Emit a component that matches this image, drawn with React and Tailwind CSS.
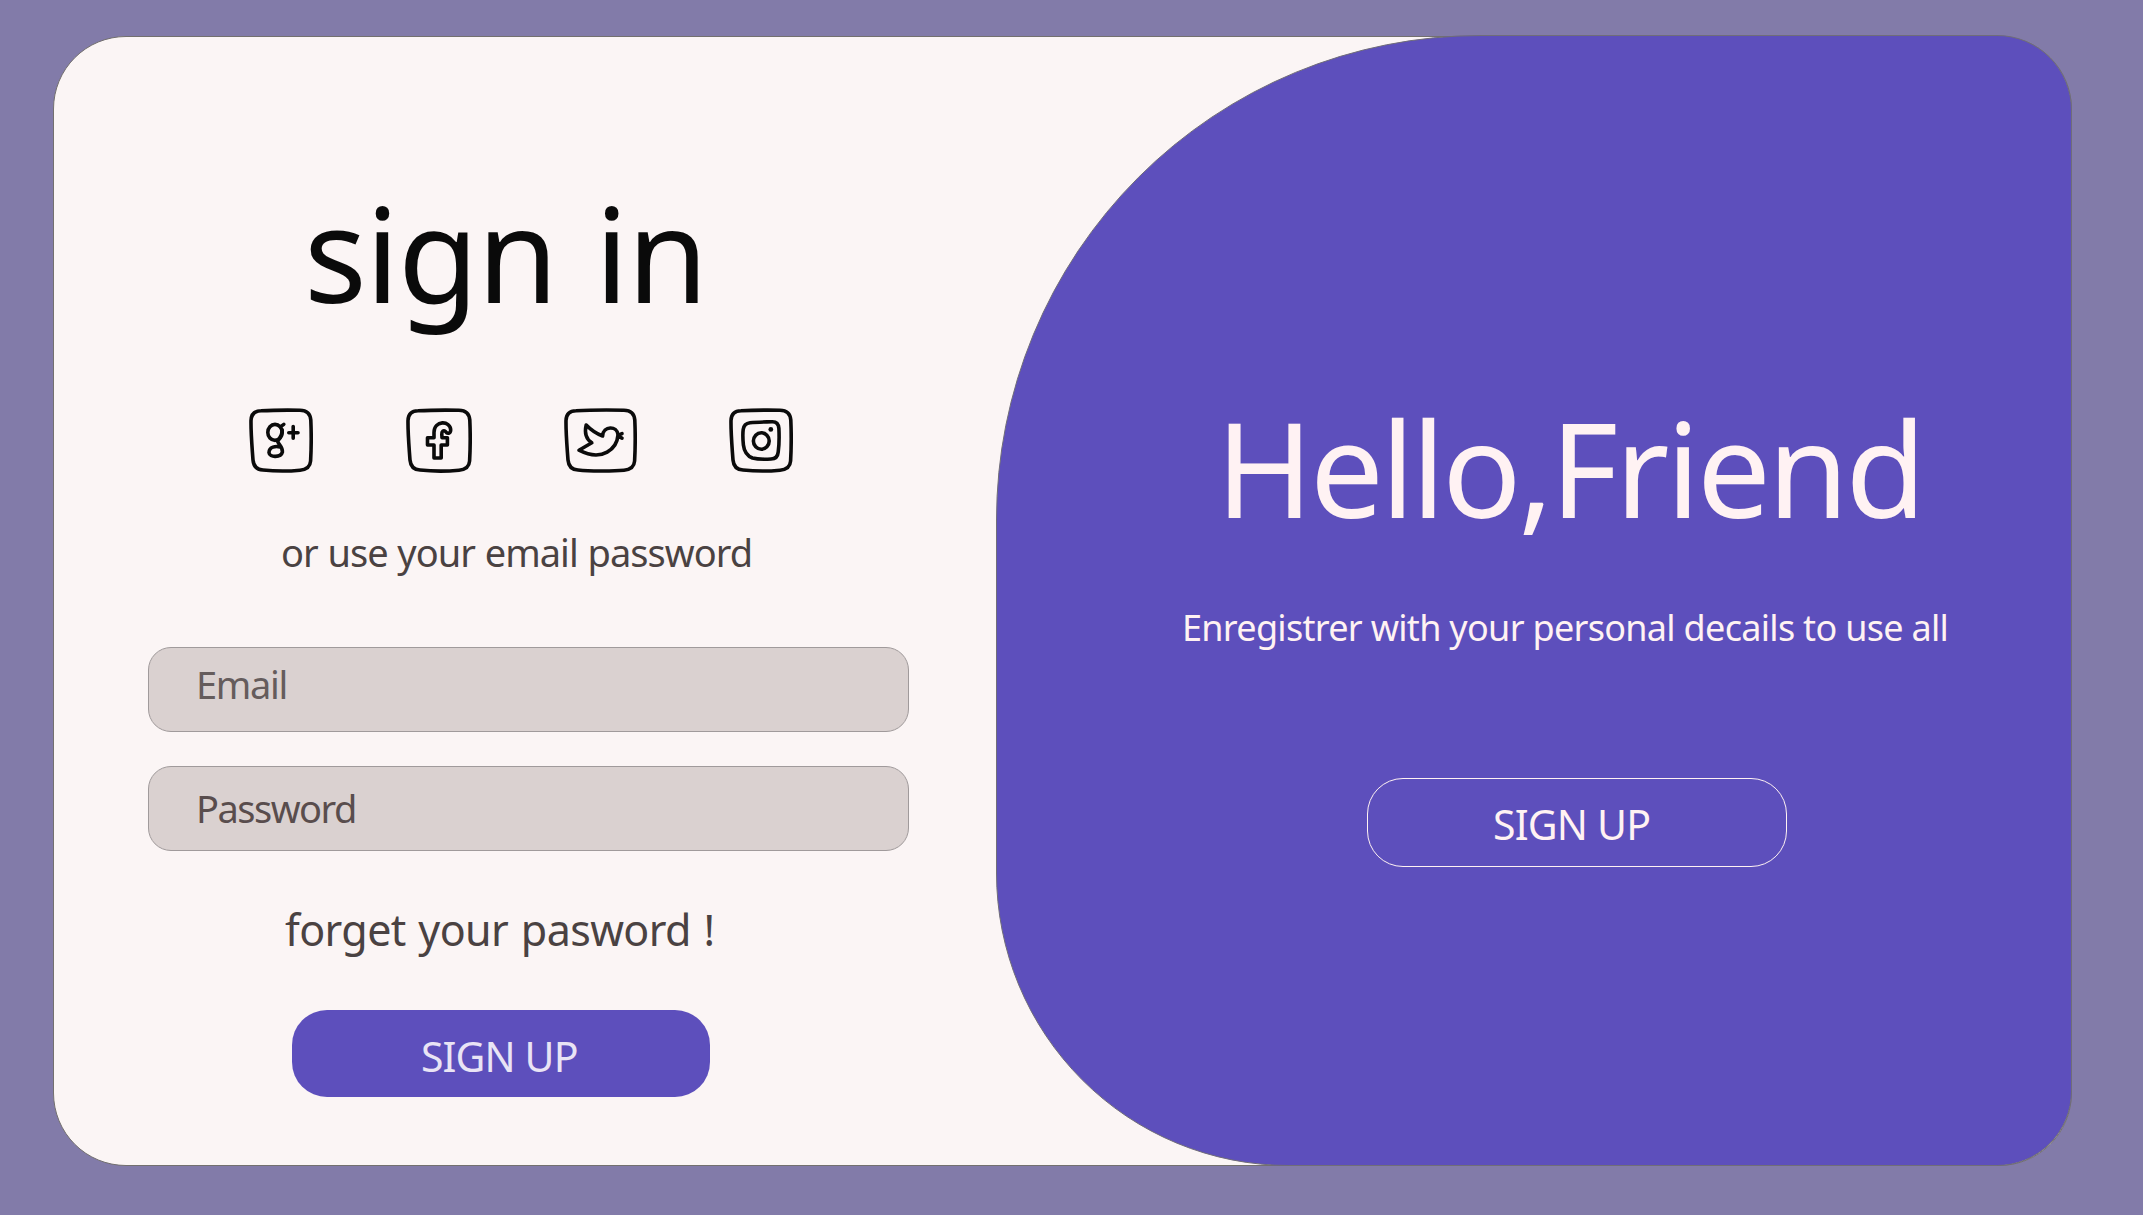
const ink = "#0b0b0b";

function Frame({ w = 64, children }) {
  return (
    <svg width={w} height="66" viewBox={`0 0 ${w} 66`} fill="none" stroke={ink} strokeWidth="3.6" strokeLinecap="round" strokeLinejoin="round">
      <path d={`M12 2.8 C25 2 ${w - 25} 2 ${w - 13} 2.2 Q${w - 3} 2.4 ${w - 2.2} 12 C${w - 1.6} 25 ${w - 1.8} 42 ${w - 2.4} 53 Q${w - 3} 61.4 ${w - 13} 62.2 C${w - 25} 63.4 25 63.2 14 62 Q4.8 61.5 4 52 C3 38 1.8 26 2 12.5 Q2.4 3 12 2.8 Z`} />
      {children}
    </svg>
  );
}

function GooglePlus() {
  return (
    <Frame>
      <ellipse cx="26" cy="24.4" rx="7.2" ry="8" />
      <path d="M32 18.4 L34.8 16.4 M33.2 22 C33.4 28 30 31 28.6 33.4 C30 37 33.8 39 33.4 44 C32 49.6 20.4 49.8 20 44.6 C20 38.4 27 38 31 39 M39.8 24.7 H49 M44.2 18.5 V30.2" />
    </Frame>
  );
}

function Facebook() {
  return (
    <Frame w={66}>
      <path d="M28 50 V37 H21.5 V29.7 H28 V24.5 C28 11.8 44.6 12.4 44.7 22 C44.6 25.8 41.2 26.2 39.6 23.6 C37.4 21.8 35.6 23.4 35.8 26.4 L36 29.7 H41.4 V37 H35.2 V50 Z" />
    </Frame>
  );
}

function Twitter() {
  return (
    <Frame w={73}>
      <path d="M22.2 17 C27.5 22.5 32 25.5 38.6 28 C39 17.5 53.5 17.5 54 27 C53 40 39 54.5 15 42.2 L27.8 34.8 C20.5 30 20.8 23 22.2 17 Z M54 27.4 L58 25.6 M54.5 28.6 L58 30.2" />
    </Frame>
  );
}

function Instagram() {
  return (
    <Frame>
      <path d="M21 14.8 C29 13.8 37 14 43 13.8 Q49.4 13.6 49.9 20.5 C50.4 31 50.2 37 49.2 44 Q48.6 50.8 42 51 C35 51.4 28 51.2 23.5 50 Q15.6 47 14.4 37 C13.8 31 13.6 26 14.2 21.5 Q15 15.6 21 14.8 Z" />
      <ellipse cx="32.3" cy="33" rx="7.9" ry="8.2" />
      <circle cx="41.8" cy="21.4" r="2.4" fill={ink} stroke="none" />
    </Frame>
  );
}

export default function App() {
  return (
    <div className="h-[1215px] w-[2143px] overflow-hidden bg-[#827ba9] pl-[53px] pt-[35px] font-['Noto_Sans','Open_Sans',sans-serif]">
      <main className="flex h-[1131px] w-[2019px]">
        <section className="mr-[-1076px] mt-px flex h-[1130px] w-full flex-col rounded-[73px] border border-[#73706f] bg-[#fbf5f5]">
          <h1 className="ml-[250px] mt-[115px] h-[200px] w-fit whitespace-nowrap text-[131px] leading-[200px] tracking-[-1.3px] text-[#0a0a0a] [word-spacing:5px]">sign in</h1>
          <div className="ml-[195px] mt-[56px] flex h-[66px] items-start">
            <GooglePlus />
            <div className="ml-[93px]"><Facebook /></div>
            <div className="ml-[92px]"><Twitter /></div>
            <div className="ml-[92px]"><Instagram /></div>
          </div>
          <p className="ml-[227px] mt-[48px] h-[60px] w-fit whitespace-nowrap text-[38px] leading-[60px] tracking-[-0.95px] text-[#4a4242] [word-spacing:0.7px]">or use your email password</p>
          <div className="ml-[94px] mt-[65px] h-[85px] w-[761px] rounded-[23px] border border-[#a09a9b] bg-[#dad1d0] pl-[47px]">
            <p className="mt-[5px] w-fit text-[38px] leading-[62px] tracking-[-1.3px] text-[#655c5c]">Email</p>
          </div>
          <div className="ml-[94px] mt-[34px] h-[85px] w-[761px] rounded-[23px] border border-[#a09a9b] bg-[#dad1d0] pl-[47px]">
            <p className="mt-[10px] w-fit text-[38px] leading-[62px] tracking-[-1.5px] text-[#594d4d]">Password</p>
          </div>
          <p className="ml-[231px] mt-[49px] h-[60px] w-fit whitespace-nowrap text-[43px] leading-[60px] tracking-[-0.6px] text-[#4a4242] [word-spacing:2px]">forget your pasword !</p>
          <button className="ml-[238px] mt-[50px] flex h-[87px] w-[418px] items-center whitespace-nowrap rounded-[35px] bg-[#5d4fbc] pl-[129px] pt-[6px] text-[41px] tracking-[-0.9px] text-[#e9e4f5]">SIGN UP</button>
        </section>
        <section className="relative flex h-[1131px] w-[1076px] shrink-0 flex-col rounded-bl-[293px] rounded-br-[75px] rounded-tl-[485px] rounded-tr-[75px] border border-[#706d78] bg-[#5d4fbc] text-[#fff2f3]">
          <h2 className="ml-[219px] mt-[331px] h-[200px] w-fit whitespace-nowrap text-[131px] leading-[200px] tracking-[-3.1px]">Hello,Friend</h2>
          <p className="ml-[185px] mt-[31px] h-[60px] w-fit whitespace-nowrap text-[36px] leading-[60px] tracking-[-0.7px]">Enregistrer with your personal decails to use all</p>
          <button className="ml-[370px] mt-[120px] flex h-[89px] w-[420px] items-center whitespace-nowrap rounded-[36px] border border-[#fff2f3] pl-[125px] pt-[4px] text-[41px] tracking-[-0.8px]">SIGN UP</button>
        </section>
      </main>
    </div>
  );
}
